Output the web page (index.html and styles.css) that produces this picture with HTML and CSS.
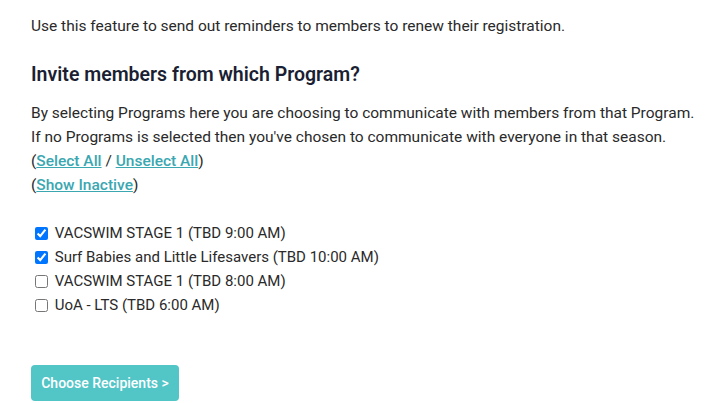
FILE: index.html
```html
<!DOCTYPE html>
<html>
<head>
<meta charset="utf-8">
<link rel="stylesheet" href="styles.css">
</head>
<body>
<div class="page">
  <p class="intro">Use this feature to send out reminders to members to renew their registration.</p>
  <h2 class="title">Invite members from which Program?</h2>
  <div class="info">
    <div>By selecting Programs here you are choosing to communicate with members from that Program.</div>
    <div>If no Programs is selected then you've chosen to communicate with everyone in that season.</div>
    <div>(<a href="#">Select All</a> / <a href="#">Unselect All</a>)</div>
    <div>(<a href="#">Show Inactive</a>)</div>
  </div>
  <ul class="programs">
    <li><label><input type="checkbox" checked> VACSWIM STAGE 1 (TBD 9:00 AM)</label></li>
    <li><label><input type="checkbox" checked> Surf Babies and Little Lifesavers (TBD 10:00 AM)</label></li>
    <li><label><input type="checkbox"> VACSWIM STAGE 1 (TBD 8:00 AM)</label></li>
    <li><label><input type="checkbox"> UoA - LTS (TBD 6:00 AM)</label></li>
  </ul>
  <button class="btn">Choose Recipients &gt;</button>
</div>
</body>
</html>
```

FILE: styles.css
```css
html, body {
  margin: 0;
  padding: 0;
  background: #fff;
}
body {
  font-family: Roboto, "Liberation Sans", sans-serif;
  font-size: 15.5px;
  color: #2a2a2a;
}
.page {
  padding: 14px 0 0 31px;
}
.intro {
  margin: 0;
  line-height: 24px;
  white-space: nowrap;
}
.title {
  margin: 24px 0 0 0;
  font-size: 19.5px;
  font-weight: 600;
  line-height: 26px;
  color: #1b1f33;
}
.info {
  margin-top: 13px;
  line-height: 24px;
  white-space: nowrap;
}
.info a {
  color: #3aa7b1;
  font-weight: 500;
  text-decoration: underline;
}
.programs {
  list-style: none;
  margin: 24px 0 0 0;
  padding: 0;
  font-size: 15px;
}
.programs li {
  line-height: 24px;
  height: 24px;
}
.programs input {
  margin: 0 3px 0 4px;
  width: 13px;
  height: 13px;
  vertical-align: -2px;
}
.btn {
  margin-top: 48px;
  width: 148px;
  height: 36px;
  border: none;
  border-radius: 4px;
  background: #52c5c7;
  color: #fff;
  font-family: Roboto, "Liberation Sans", sans-serif;
  font-size: 14px;
  font-weight: 500;
  padding: 0;
}
```
